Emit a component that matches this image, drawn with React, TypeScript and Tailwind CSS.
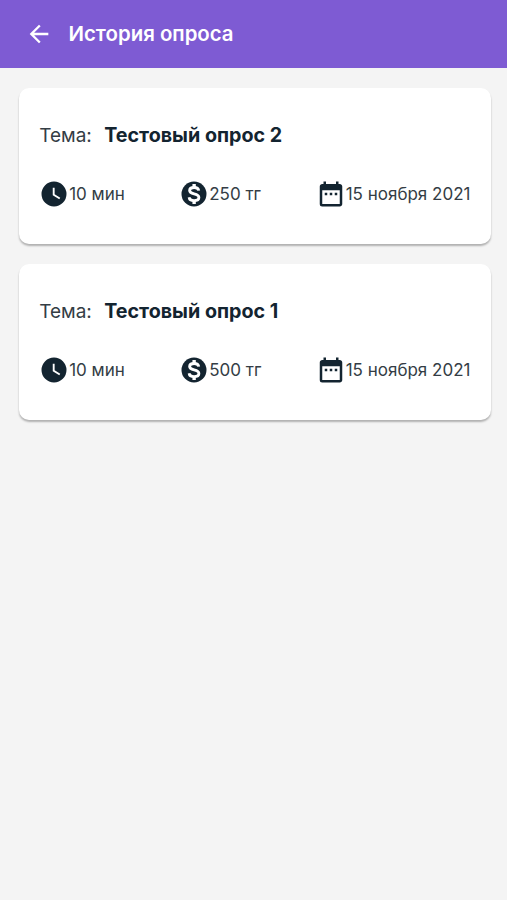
import React from 'react';
import { MdArrowBack, MdDateRange } from 'react-icons/md';

type Survey = {
  id: number;
  topic: string;
  duration: string;
  reward: string;
  date: string;
};

const surveys: Survey[] = [
  { id: 2, topic: 'Тестовый опрос 2', duration: '10 мин', reward: '250 тг', date: '15 ноября 2021' },
  { id: 1, topic: 'Тестовый опрос 1', duration: '10 мин', reward: '500 тг', date: '15 ноября 2021' },
];

const ClockIcon = () => (
  <svg viewBox="0 0 24 24" className="h-[30px] w-[30px] text-[#132430]" fill="currentColor">
    <path d="M12 2A10 10 0 0 0 2 12a10 10 0 0 0 10 10 10 10 0 0 0 10-10A10 10 0 0 0 12 2m4.2 14.2L11 13V7h1.5v5.2l4.5 2.7z" />
  </svg>
);

const DollarIcon = () => (
  <svg viewBox="0 0 24 24" className="h-[30px] w-[30px] text-[#132430]" fill="none">
    <circle cx="12" cy="12" r="10" fill="currentColor" />
    <path
      d="M15.8 9.3C15.5 7.6 14.1 6.8 12.1 6.8c-2.2 0-3.6.9-3.6 2.4 0 1.7 1.5 2.2 3.6 2.7 2.4.6 3.8 1.2 3.8 2.9 0 1.6-1.5 2.5-3.8 2.5-2.2 0-3.8-.9-4-2.7"
      stroke="white"
      strokeWidth="2.3"
    />
    <path d="M12.1 4v3.2M12.1 17v3" stroke="white" strokeWidth="2.7" />
  </svg>
);

const SurveyCard = ({ survey }: { survey: Survey }) => (
  <div className="h-[156px] rounded-[10px] bg-white px-5 pt-[34px] shadow-[0_2px_2px_rgba(0,0,0,0.28)]">
    <div className="flex h-7 items-center">
      <span className="w-[65px] text-[19px] text-[#343d45]">Тема:</span>
      <span className="text-[19.7px] font-bold whitespace-nowrap">{survey.topic}</span>
    </div>
    <div className="mt-[29px] flex h-[30px] items-center text-[17px] leading-[26px] whitespace-nowrap text-[#343d45]">
      <div className="flex w-[140px] items-center">
        <ClockIcon />
        <span>{survey.duration}</span>
      </div>
      <div className="flex w-[136.5px] items-center">
        <DollarIcon />
        <span>{survey.reward}</span>
      </div>
      <div className="flex items-center">
        <MdDateRange className="h-[30px] w-[30px] text-[#132430]" />
        <span>{survey.date}</span>
      </div>
    </div>
  </div>
);

const App = () => {
  return (
    <div className="min-h-screen bg-[#f4f4f4] font-['Inter',sans-serif] text-[#132430]">
      <header className="flex h-[68px] items-center bg-[#7e5bd3] text-white">
        <MdArrowBack className="ml-[25px] h-7 w-7" />
        <h1 className="ml-[15.5px] text-[20.4px] leading-[30px] font-semibold">История опроса</h1>
      </header>
      <main className="flex flex-col gap-5 pt-5 pr-[16.5px] pl-[19.2px]">
        {surveys.map((survey) => (
          <SurveyCard key={survey.id} survey={survey} />
        ))}
      </main>
    </div>
  );
};

export default App;
